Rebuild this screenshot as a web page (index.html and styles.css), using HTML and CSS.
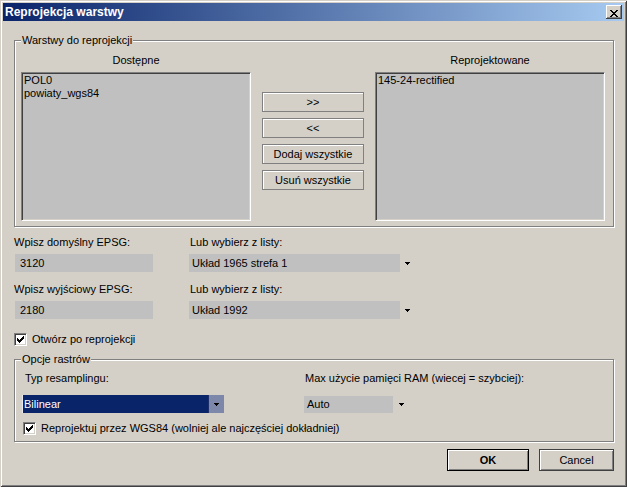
FILE: index.html
```html
<!DOCTYPE html>
<html lang="pl">
<head>
<meta charset="utf-8">
<title>Reprojekcja warstwy</title>
<link rel="stylesheet" href="styles.css">
</head>
<body>
<div class="window">
  <div class="titlebar">
    <span class="title">Reprojekcja warstwy</span>
    <button class="close" aria-label="Zamknij">
      <svg width="8" height="7" viewBox="0 0 8 7"><path d="M0 0h2v1H0zM6 0h2v1H6zM1 1h2v1H1zM5 1h2v1H5zM2 2h4v1H2zM3 3h2v1H3zM2 4h4v1H2zM1 5h2v1H1zM5 5h2v1H5zM0 6h2v1H0zM6 6h2v1H6z" fill="#000"/></svg>
    </button>
  </div>
  <div class="content">
    <div class="group group-layers">
      <span class="group-title">Warstwy do reprojekcji</span>
      <div class="layers">
        <div class="col">
          <div class="col-label">Dostępne</div>
          <div class="listbox">
            <div class="item">POL0</div>
            <div class="item">powiaty_wgs84</div>
          </div>
        </div>
        <div class="move-buttons">
          <button class="btn">&gt;&gt;</button>
          <button class="btn">&lt;&lt;</button>
          <button class="btn">Dodaj wszystkie</button>
          <button class="btn">Usuń wszystkie</button>
        </div>
        <div class="col">
          <div class="col-label">Reprojektowane</div>
          <div class="listbox">
            <div class="item">145-24-rectified</div>
          </div>
        </div>
      </div>
    </div>

    <div class="epsg-block">
      <div class="lbl">Wpisz domyślny EPSG:</div>
      <div class="lbl lbl-right">Lub wybierz z listy:</div>
      <div class="field">3120</div>
      <div class="combo combo-epsg">
        <div class="combo-value">Układ 1965 strefa 1</div>
        <div class="combo-arrow"><svg width="5" height="3" viewBox="0 0 5 3"><path d="M0 0h5v1H0zM1 1h3v1H1zM2 2h1v1H2z" fill="#000"/></svg></div>
      </div>
    </div>
    <div class="epsg-block second">
      <div class="lbl">Wpisz wyjściowy EPSG:</div>
      <div class="lbl lbl-right">Lub wybierz z listy:</div>
      <div class="field">2180</div>
      <div class="combo combo-epsg">
        <div class="combo-value">Układ 1992</div>
        <div class="combo-arrow"><svg width="5" height="3" viewBox="0 0 5 3"><path d="M0 0h5v1H0zM1 1h3v1H1zM2 2h1v1H2z" fill="#000"/></svg></div>
      </div>
    </div>

    <div class="check-row check-open">
      <span class="checkbox"><svg width="9" height="9" viewBox="0 0 9 9"><path d="M1 3h1v3H1zM2 4h1v3H2zM3 5h1v3H3zM4 4h1v3H4zM5 3h1v3H5zM6 2h1v3H6zM7 1h1v3H7z" fill="#000"/></svg></span>
      <span>Otwórz po reprojekcji</span>
    </div>

    <div class="group group-raster">
      <span class="group-title">Opcje rastrów</span>
      <div class="raster">
        <div class="lbl lbl-resample">Typ resamplingu:</div>
        <div class="lbl lbl-ram">Max użycie pamięci RAM (wiecej = szybciej):</div>
        <div class="combo combo-focus">
          <div class="combo-value">Bilinear</div>
          <div class="combo-arrow"><svg width="5" height="3" viewBox="0 0 5 3"><path d="M0 0h5v1H0zM1 1h3v1H1zM2 2h1v1H2z" fill="#000"/></svg></div>
        </div>
        <div class="combo combo-ram">
          <div class="combo-value">Auto</div>
          <div class="combo-arrow"><svg width="5" height="3" viewBox="0 0 5 3"><path d="M0 0h5v1H0zM1 1h3v1H1zM2 2h1v1H2z" fill="#000"/></svg></div>
        </div>
      </div>
      <div class="check-row check-wgs">
        <span class="checkbox"><svg width="9" height="9" viewBox="0 0 9 9"><path d="M1 3h1v3H1zM2 4h1v3H2zM3 5h1v3H3zM4 4h1v3H4zM5 3h1v3H5zM6 2h1v3H6zM7 1h1v3H7z" fill="#000"/></svg></span>
        <span>Reprojektuj przez WGS84 (wolniej ale najczęściej dokładniej)</span>
      </div>
    </div>

    <div class="dialog-buttons">
      <button class="btn-dlg btn-ok">OK</button>
      <button class="btn-dlg btn-cancel">Cancel</button>
    </div>
  </div>
</div>
</body>
</html>
```

FILE: styles.css
```css
* { box-sizing: border-box; }

html, body {
  margin: 0;
  padding: 0;
}

body {
  width: 627px;
  height: 487px;
  overflow: hidden;
  background: #d4d0c8;
  font-family: "Liberation Sans", Arial, sans-serif;
  font-size: 11px;
  color: #000;
}

button {
  font: inherit;
  color: #000;
  margin: 0;
  cursor: default;
}

.window {
  width: 627px;
  height: 487px;
  padding: 3px;
  background: #d4d0c8;
  box-shadow:
    inset 1px 1px 0 #d4d0c8,
    inset -1px -1px 0 #404040,
    inset 2px 2px 0 #ffffff,
    inset -2px -2px 0 #808080;
  display: flex;
  flex-direction: column;
}

/* title bar */
.titlebar {
  height: 18px;
  background: linear-gradient(to right, #0a246a, #a6caf0);
  display: flex;
  align-items: center;
  justify-content: space-between;
  padding: 0 2px 0 2px;
}

.title {
  color: #fff;
  font-size: 12px;
  font-weight: bold;
  line-height: 18px;
  white-space: nowrap;
}

.close {
  width: 16px;
  height: 14px;
  padding: 3px 0 0 4px;
  border: 0;
  background: #d4d0c8;
  box-shadow:
    inset -1px -1px 0 #404040,
    inset 1px 1px 0 #ffffff,
    inset -2px -2px 0 #808080;
  display: block;
}

.close svg { display: block; }

/* content */
.content {
  padding: 0 10px 0 11px;
  display: flex;
  flex-direction: column;
}

.group {
  position: relative;
  border: 1px solid #808080;
  box-shadow: inset 1px 1px 0 #ffffff, 1px 1px 0 #ffffff;
}

.group-title {
  position: absolute;
  top: -7px;
  left: 6px;
  padding: 0 1px;
  line-height: 13px;
  background: #d4d0c8;
  white-space: nowrap;
}

.group-layers {
  margin-top: 19px;
  padding: 13px 8px 5px 6px;
}

.layers {
  display: flex;
  gap: 11px;
}

.col {
  width: 230px;
  display: flex;
  flex-direction: column;
}

.col-label {
  line-height: 13px;
  text-align: center;
}

.listbox {
  margin-top: 5px;
  height: 149px;
  background: #c0c0c0;
  border: 1px solid;
  border-color: #808080 #ffffff #ffffff #808080;
  box-shadow: inset 1px 1px 0 #404040, inset -1px -1px 0 #d4d0c8;
  padding: 1px 2px;
}

.item {
  line-height: 13px;
  white-space: nowrap;
}

.move-buttons {
  width: 102px;
  padding-top: 38px;
  display: flex;
  flex-direction: column;
  gap: 6px;
}

.btn {
  height: 20px;
  padding: 0;
  background: #d4d0c8;
  border: 1px solid #808080;
  box-shadow: inset 1px 1px 0 #ffffff;
  text-align: center;
}

/* EPSG */
.epsg-block {
  margin-top: 9px;
  display: grid;
  grid-template-columns: 175px 225px;
  row-gap: 5px;
}

.epsg-block.second { margin-top: 11px; }

.lbl {
  line-height: 13px;
  white-space: nowrap;
}

.lbl-right { margin-left: 1px; }

.field {
  margin-left: 1px;
  width: 138px;
  height: 18px;
  background: #c0c0c0;
  padding: 1px 0 0 5px;
  line-height: 17px;
}

.combo {
  height: 18px;
  display: flex;
}

.combo-epsg { width: 225px; }

.combo-value {
  flex: 1;
  background: #c0c0c0;
  padding: 1px 0 0 3px;
  line-height: 17px;
  white-space: nowrap;
  overflow: hidden;
}

.combo-arrow {
  width: 14px;
  background: #d4d0c8;
  display: flex;
  align-items: center;
  justify-content: center;
}

.combo-arrow svg { display: block; }

/* checkboxes */
.check-row {
  display: flex;
  align-items: center;
  gap: 5px;
  height: 13px;
  line-height: 13px;
  white-space: nowrap;
}

.check-open { margin-top: 14px; }

.checkbox {
  width: 13px;
  height: 13px;
  flex: none;
  background: #ffffff;
  border: 1px solid;
  border-color: #808080 #ffffff #ffffff #808080;
  box-shadow: inset 1px 1px 0 #404040, inset -1px -1px 0 #d4d0c8;
}

.checkbox svg {
  display: block;
  margin: 1px;
}

/* raster group */
.group-raster {
  margin-top: 13px;
  padding: 12px 8px 6px 7px;
}

.raster {
  display: grid;
  grid-template-columns: 282px auto;
  row-gap: 10px;
}

.lbl-resample { margin-left: 3px; }
.lbl-ram { margin-left: 1px; }

.combo-focus {
  width: 202px;
  background: #0a246a;
  box-shadow: inset 0 0 0 1px #0b1d52;
}

.combo-focus .combo-value {
  background: #0a246a;
  color: #fff;
  border-left: 1px solid #e8e8f0;
  padding-left: 1px;
}

.combo-focus .combo-arrow {
  width: 16px;
  background: #7c87a9;
  border-left: 1px solid #1c2f6a;
}

.combo-ram {
  width: 105px;
  height: 17px;
  margin-top: 1px;
}

.combo-ram .combo-value { padding-top: 0; }
.combo-ram .combo-arrow { width: 16px; }

.check-wgs {
  margin-top: 9px;
  margin-left: 1px;
}

/* dialog buttons */
.dialog-buttons {
  margin-top: 7px;
  display: flex;
  justify-content: flex-end;
  gap: 10px;
}

.btn-dlg {
  height: 22px;
  padding: 0;
  background: #d4d0c8;
  text-align: center;
}

.btn-ok {
  width: 82px;
  font-weight: bold;
  border: 1px solid #000;
  box-shadow: inset 1px 1px 0 #ffffff, inset -1px -1px 0 #808080;
}

.btn-cancel {
  width: 75px;
  border: 1px solid #404040;
  box-shadow: inset 1px 1px 0 #ffffff, inset -1px -1px 0 #808080;
}
```
